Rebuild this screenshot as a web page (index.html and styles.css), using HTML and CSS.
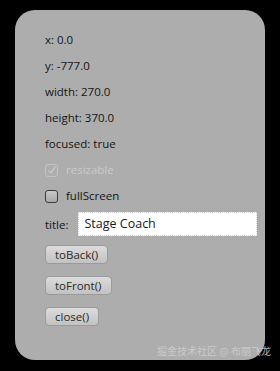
FILE: index.html
```html
<html>
<head>
  <meta charset="UTF-8">
  <meta name="viewport" content="width=device-width, initial-scale=1">
  <link rel="stylesheet" href="styles.css">
</head>
<body>
  <div class="stage">
    <p class="row">x: 0.0</p>
    <p class="row">y: -777.0</p>
    <p class="row">width: 270.0</p>
    <p class="row">height: 370.0</p>
    <p class="row">focused: true</p>
    <label class="row check disabled">
      <span class="box checked">
        <svg width="10" height="10" viewBox="0 0 10 10"><path d="M1.5 5.5 L4 8 L8.5 1.5" fill="none" stroke="#c9c9c9" stroke-width="1.4"/></svg>
      </span>
      resizable
    </label>
    <label class="row check">
      <span class="box"></span>
      fullScreen
    </label>
    <div class="title-row">
      <span class="title-label">title:</span>
      <div class="field">Stage Coach</div>
    </div>
    <div class="buttons">
      <button class="btn">toBack()</button>
      <button class="btn">toFront()</button>
      <button class="btn">close()</button>
    </div>
  </div>
  <div class="mark">掘金技术社区 @ 布丽飞龙</div>
</body>
</html>
```
FILE: styles.css
```css
body {
  margin: 0;
  padding: 0;
  background: #000;
  width: 280px;
  height: 371px;
  overflow: hidden;
  position: relative;
  font-family: "Open Sans", "DejaVu Sans", sans-serif;
}
.stage {
  margin: 10px 15px 0 15px;
  width: 250px;
  height: 350px;
  box-sizing: border-box;
  border-radius: 20px;
  background: #adadad;
  padding: 17px 0 0 30px;
  display: flex;
  flex-direction: column;
}
.row {
  margin: 0;
  height: 26px;
  line-height: 26px;
  font-size: 11.5px;
  color: #151515;
}
.check {
  display: flex;
  align-items: center;
  gap: 8px;
}
.check.disabled {
  color: #cbcbcb;
}
.box {
  width: 11px;
  height: 11px;
  border: 1.5px solid #3c3c3c;
  border-radius: 3px;
  background: linear-gradient(#c8c8c8, #a8a8a8);
  display: flex;
  align-items: center;
  justify-content: center;
}
.box.checked {
  border-color: #c4c4c4;
  background: none;
}
.title-row {
  margin-top: 3px;
  height: 24px;
  display: flex;
  align-items: center;
  gap: 10px;
  font-size: 11.5px;
  color: #151515;
}
.field {
  width: 179px;
  height: 24px;
  box-sizing: border-box;
  background: #fff;
  border: 1px dotted #d8d8d8;
  padding-left: 5px;
  line-height: 22px;
  font-size: 12.5px;
  color: #1a1a1a;
}
.buttons {
  margin-top: 9px;
  display: flex;
  flex-direction: column;
  align-items: flex-start;
  gap: 12px;
}
.btn {
  height: 19px;
  padding: 0 9px;
  font-family: "Open Sans", "DejaVu Sans", sans-serif;
  font-size: 11.5px;
  color: #2a2a2a;
  border: 1px solid #9a9a9a;
  border-radius: 4px;
  background: linear-gradient(#dcdcdc, #c2c2c2);
  line-height: 16px;
}
.mark {
  position: absolute;
  right: 9px;
  top: 343px;
  font-family: "Noto Sans CJK SC", sans-serif;
  font-size: 10px;
  color: #d0d0d0;
  opacity: 0.85;
}
```
